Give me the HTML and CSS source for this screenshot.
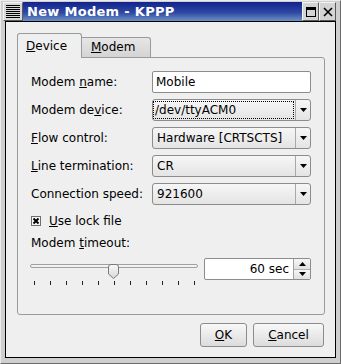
FILE: index.html
```html
<!DOCTYPE html>
<html lang="en">
<head>
    <meta charset="UTF-8">
    <title>New Modem - KPPP</title>
    <link rel="stylesheet" href="styles.css">
</head>
<body>

<div class="window">
    <div class="titlebar">
        <div class="menu-btn"><div class="menu-lines"></div></div>
        <div class="title">New Modem - KPPP</div>
        <div class="tb-btn">
            <svg width="10" height="10" viewBox="0 0 10 10"><rect x="0.5" y="0.5" width="9" height="9" fill="none" stroke="#000"/><rect x="0" y="0" width="10" height="3" fill="#000"/></svg>
        </div>
        <div class="tb-btn">
            <svg width="10" height="10" viewBox="0 0 10 10"><path d="M1 1 L9 9 M9 1 L1 9" stroke="#000" stroke-width="1.6"/></svg>
        </div>
    </div>

    <div class="client">
        <div class="tabs">
            <div class="tab active"><u>D</u>evice</div>
            <div class="tab"><u>M</u>odem</div>
        </div>

        <div class="panel">
            <div class="form">
                <div class="label">Modem <u>n</u>ame:</div>
                <div class="lineedit">Mobile</div>

                <div class="label">Modem de<u>v</u>ice:</div>
                <div class="combo">
                    <div class="combo-text focus">/dev/ttyACM0</div>
                    <div class="combo-arrow"><svg width="7" height="4" viewBox="0 0 7 4"><polygon points="0,0 7,0 3.5,4" fill="#000"/></svg></div>
                </div>

                <div class="label"><u>F</u>low control:</div>
                <div class="combo">
                    <div class="combo-text">Hardware [CRTSCTS]</div>
                    <div class="combo-arrow"><svg width="7" height="4" viewBox="0 0 7 4"><polygon points="0,0 7,0 3.5,4" fill="#000"/></svg></div>
                </div>

                <div class="label"><u>L</u>ine termination:</div>
                <div class="combo">
                    <div class="combo-text">CR</div>
                    <div class="combo-arrow"><svg width="7" height="4" viewBox="0 0 7 4"><polygon points="0,0 7,0 3.5,4" fill="#000"/></svg></div>
                </div>

                <div class="label">Connection speed:</div>
                <div class="combo">
                    <div class="combo-text">921600</div>
                    <div class="combo-arrow"><svg width="7" height="4" viewBox="0 0 7 4"><polygon points="0,0 7,0 3.5,4" fill="#000"/></svg></div>
                </div>
            </div>

            <div class="check-row">
                <svg width="10" height="10" viewBox="0 0 10 10"><rect x="0.5" y="0.5" width="9" height="9" fill="#f8f8f8" stroke="#6e6e6e"/><path d="M2.5 2.5 L7.5 7.5 M7.5 2.5 L2.5 7.5" stroke="#000" stroke-width="2"/></svg>
                <span><u>U</u>se lock file</span>
            </div>

            <div class="timeout-label">Modem <u>t</u>imeout:</div>

            <div class="slider-row">
                <div class="slider">
                    <div class="groove-wrap">
                        <div class="groove"></div>
                        <svg class="handle" width="11" height="15" viewBox="0 0 11 15">
                            <defs><linearGradient id="hg" x1="0" y1="0" x2="0" y2="1"><stop offset="0" stop-color="#fafafa"/><stop offset="1" stop-color="#d6d6d6"/></linearGradient></defs>
                            <path d="M0.5 3 Q0.5 0.5 3 0.5 H8 Q10.5 0.5 10.5 3 V10 L5.5 14.5 L0.5 10 Z" fill="url(#hg)" stroke="#7a7a7a"/>
                        </svg>
                    </div>
                    <div class="ticks">
                        <i></i><i></i><i></i><i></i><i></i><i></i><i></i><i></i><i></i><i></i><i></i>
                    </div>
                </div>
                <div class="spinbox">
                    <div class="spin-value">60 sec</div>
                    <div class="spin-btns">
                        <div class="spin-up"><svg width="7" height="4" viewBox="0 0 7 4"><polygon points="0,4 7,4 3.5,0" fill="#000"/></svg></div>
                        <div class="spin-down"><svg width="7" height="4" viewBox="0 0 7 4"><polygon points="0,0 7,0 3.5,4" fill="#000"/></svg></div>
                    </div>
                </div>
            </div>
        </div>

        <div class="buttons">
            <div class="btn ok"><u>O</u>K</div>
            <div class="btn cancel"><u>C</u>ancel</div>
        </div>
    </div>
</div>

</body>
</html>
```

FILE: styles.css
```css
body {
    margin: 0;
    font-family: "DejaVu Sans", sans-serif;
    font-size: 12px;
    color: #000;
}

/* Window frame */
.window {
    box-sizing: border-box;
    width: 341px;
    height: 364px;
    display: flex;
    flex-direction: column;
    padding: 1px 4px 5px 2px;
    background: #cfcfcf;
    border: 1px solid;
    border-color: #ececec #6a6a6a #6a6a6a #ececec;
}

.titlebar {
    display: flex;
    height: 19px;
}

.menu-btn {
    box-sizing: border-box;
    width: 20px;
    padding: 2px 2px;
    background: #d8d8d8;
    border: 1px solid;
    border-color: #f4f4f4 #5a5a5a #5a5a5a #f4f4f4;
}

.menu-lines {
    height: 100%;
    background: repeating-linear-gradient(to bottom, #000 0, #000 1px, transparent 1px, transparent 2px);
}

.title {
    flex: 1;
    padding-left: 4px;
    background: linear-gradient(to bottom, #13238e, #2d48a2 55%, #6f8fc4);
    color: #fff;
    font-weight: bold;
    font-size: 13px;
    letter-spacing: 0.3px;
    line-height: 19px;
}

.tb-btn {
    box-sizing: border-box;
    width: 17px;
    display: flex;
    align-items: center;
    justify-content: center;
    background: #d4d4d4;
    border: 1px solid;
    border-color: #f4f4f4 #5a5a5a #5a5a5a #f4f4f4;
}

.tb-btn:first-of-type {
    width: 18px;
}

/* Client area */
.client {
    flex: 1;
    margin-left: 2px;
    border: 1px solid #000;
    background: #efefef;
    display: flex;
    flex-direction: column;
    padding: 11px 10px 10px 11px;
}

.tabs {
    display: flex;
    align-items: flex-end;
    height: 24px;
}

.tab {
    box-sizing: border-box;
    width: 69px;
    height: 20px;
    padding: 2px 0 0 9px;
    line-height: 15px;
    border: 1px solid #9a9a9a;
    border-left: none;
    border-bottom: none;
    border-radius: 0 3px 0 0;
    background: linear-gradient(to bottom, #e6e6e6, #d4d4d4);
}

.tab.active {
    position: relative;
    z-index: 1;
    width: 65px;
    height: 25px;
    margin-bottom: -1px;
    padding: 5px 0 0 8px;
    border-left: 1px solid #9a9a9a;
    border-radius: 3px 3px 0 0;
    background: #efefef;
}

.panel {
    flex: 1;
    display: flex;
    flex-direction: column;
    padding: 13px 12px 0 13px;
    border: 1px solid #9a9a9a;
    border-radius: 0 3px 3px 3px;
}

.form {
    display: grid;
    grid-template-columns: 121px 159px;
    grid-auto-rows: 22px;
    row-gap: 6px;
    align-items: center;
}

.lineedit {
    box-sizing: border-box;
    height: 22px;
    padding-left: 3px;
    line-height: 20px;
    background: #fff;
    border: 1px solid #8c8c8c;
    border-radius: 2px;
}

.combo {
    box-sizing: border-box;
    height: 22px;
    display: flex;
    border: 1px solid #8c8c8c;
    border-radius: 3px;
    background: linear-gradient(to bottom, #f6f6f6, #e4e4e4);
}

.combo-text {
    flex: 1;
    margin: 1px 1px 1px 0;
    padding-left: 4px;
    line-height: 18px;
}

.combo-text.focus {
    border: 1px dotted #000;
    padding-left: 1px;
    line-height: 16px;
}

.combo-arrow {
    width: 14px;
    display: flex;
    align-items: center;
    justify-content: center;
    border-left: 1px solid #a8a8a8;
}

.check-row {
    margin-top: 9px;
    height: 14px;
    display: flex;
    align-items: center;
    gap: 8px;
}

.timeout-label {
    margin-top: 8px;
    line-height: 15px;
}

.slider-row {
    margin-top: 7px;
    margin-left: -1px;
    height: 22px;
    display: flex;
    gap: 6px;
}

.slider {
    width: 168px;
    padding-top: 2px;
}

.groove-wrap {
    position: relative;
    height: 15px;
}

.groove {
    box-sizing: border-box;
    margin-top: 4px;
    height: 4px;
    background: #f2f2f2;
    border: 1px solid #a0a0a0;
    border-radius: 2px;
}

.handle {
    position: absolute;
    top: 0;
    left: 78px;
}

.ticks {
    margin-top: 2px;
    height: 4px;
    display: flex;
    justify-content: space-between;
    padding: 0 3px 0 4px;
}

.ticks i {
    width: 1px;
    background: #222;
}

.spinbox {
    box-sizing: border-box;
    width: 107px;
    height: 22px;
    display: flex;
    background: #fff;
    border: 1px solid #8c8c8c;
    border-radius: 2px;
}

.spin-value {
    flex: 1;
    text-align: right;
    padding-right: 4px;
    line-height: 20px;
}

.spin-btns {
    width: 16px;
    display: flex;
    flex-direction: column;
    border-left: 1px solid #a0a0a0;
}

.spin-up, .spin-down {
    flex: 1;
    display: flex;
    align-items: center;
    justify-content: center;
    background: linear-gradient(to bottom, #f6f6f6, #e0e0e0);
}

.spin-down {
    border-top: 1px solid #b0b0b0;
}

.buttons {
    margin-top: 8px;
    margin-right: 1px;
    display: flex;
    justify-content: flex-end;
    gap: 6px;
}

.btn {
    box-sizing: border-box;
    height: 24px;
    display: flex;
    align-items: center;
    justify-content: center;
    border: 1px solid #8c8c8c;
    border-radius: 3px;
    background: linear-gradient(to bottom, #f8f8f8, #dcdcdc);
}

.btn.ok {
    width: 47px;
}

.btn.cancel {
    width: 71px;
}
```
